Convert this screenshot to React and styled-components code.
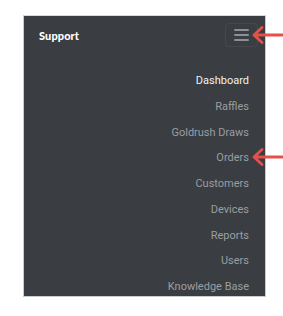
import React from "react";
import styled, { createGlobalStyle } from "styled-components";

const GlobalStyle = createGlobalStyle`
  body {
    margin: 0;
    background: #fff;
    font-family: "Roboto", "Liberation Sans", sans-serif;
  }
`;

const items = [
  "Dashboard",
  "Raffles",
  "Goldrush Draws",
  "Orders",
  "Customers",
  "Devices",
  "Reports",
  "Users",
  "Knowledge Base",
];

const Arrow = ({ top }) => (
  <ArrowWrap style={{ top }}>
    <svg width="32" height="20" viewBox="0 0 32 20">
      <path
        d="M3 10 H32 M11 2.5 L3 10 L11 17.5"
        fill="none"
        stroke="#e5504b"
        strokeWidth="2.8"
        strokeLinecap="round"
        strokeLinejoin="round"
      />
    </svg>
  </ArrowWrap>
);

const App = () => {
  return (
    <Page>
      <GlobalStyle />
      <Panel>
        <Header>
          <Brand>Support</Brand>
          <Toggler aria-label="menu">
            <span />
            <span />
            <span />
          </Toggler>
        </Header>
        <Menu>
          {items.map((item, i) => (
            <MenuItem key={item} active={i === 0}>
              {item}
            </MenuItem>
          ))}
        </Menu>
      </Panel>
      <Arrow top={25} />
      <Arrow top={147} />
    </Page>
  );
};

export default App;

const Page = styled.div`
  position: relative;
  width: 283px;
  height: 316px;
  padding: 15px 0 0 23px;
  box-sizing: border-box;
`;

const Panel = styled.div`
  width: 243px;
  height: 282px;
  background: #3a3d41;
  box-sizing: border-box;
  border: 1px solid #c9cbcd;
  border-top-color: #d8d9da;
`;

const Header = styled.div`
  display: flex;
  align-items: center;
  justify-content: space-between;
  height: 24px;
  padding: 7px 7px 0 15px;
`;

const Brand = styled.div`
  font-family: "Lato", "Liberation Sans", sans-serif;
  font-weight: 900;
  font-size: 11px;
  color: #ffffff;
  letter-spacing: 0.1px;
`;

const Toggler = styled.button`
  width: 33px;
  height: 24px;
  border: 1px solid #45484c;
  border-radius: 4px;
  background: transparent;
  display: flex;
  flex-direction: column;
  align-items: center;
  justify-content: center;
  gap: 3px;
  padding: 0;

  span {
    display: block;
    width: 15px;
    height: 2px;
    background: #8d9094;
    border-radius: 1px;
  }
`;

const Menu = styled.ul`
  list-style: none;
  margin: 0;
  padding: 21px 16px 0 0;
  display: flex;
  flex-direction: column;
  align-items: flex-end;
`;

const MenuItem = styled.li`
  font-size: 11px;
  line-height: 25.75px;
  color: ${({ active }) => (active ? "#f2f2f2" : "#9b9ea2")};
`;

const ArrowWrap = styled.div`
  position: absolute;
  left: 251px;
  line-height: 0;
`;
